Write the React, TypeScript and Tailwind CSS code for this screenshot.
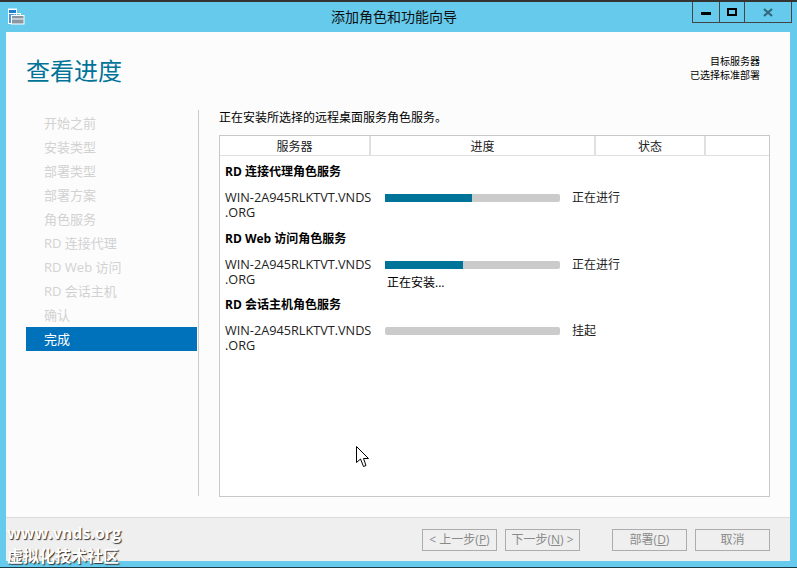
const FONT = '"Open Sans", "Noto Sans CJK SC", sans-serif';

const steps = ["开始之前", "安装类型", "部署类型", "部署方案", "角色服务", "RD 连接代理", "RD Web 访问", "RD 会话主机", "确认"];

function Group({ title, pct, status, note, className }: { title: string; pct: number; status: string; note?: string; className: string }) {
  return (
    <div className={className}>
      <div className="h-[17px] pl-[5px] text-[12px] leading-[17px] font-bold text-black">{title}</div>
      <div className="mt-[10px] flex">
        <div className="w-[165px] pl-[5px] text-[12.7px] leading-[15px] whitespace-nowrap text-[#222]">
          WIN-2A945RLKTVT.VNDS<br />.ORG
        </div>
        <div className="w-[187px]">
          <div className="mt-[4px] h-[8px] w-[175px] rounded-[2px] bg-[#cbcbcb]">
            <div className="h-full bg-[#007399]" style={{ width: `${pct}%` }} />
          </div>
          {note && <div className="mt-[6px] pl-[2px] text-[12px] leading-[16px] text-black">{note}</div>}
        </div>
        <div className="text-[12px] leading-[15px] text-[#222]">{status}</div>
      </div>
    </div>
  );
}

function Btn({ children, className = "" }: { children: React.ReactNode; className?: string }) {
  return (
    <div className={`flex h-[22px] w-[75px] items-center justify-center border border-[#acacac] text-[12px] text-[#8a8a8a] ${className}`}>
      {children}
    </div>
  );
}

export default function App() {
  return (
    <div className="relative flex h-[568px] w-[797px] flex-col overflow-hidden border-t-2 border-b border-t-[#333] border-b-[#1b3a47] bg-[#65caec]" style={{ fontFamily: FONT }}>
      {/* title bar */}
      <div className="flex h-[30px] shrink-0 items-start">
        <svg width="18" height="18" viewBox="0 0 18 18" className="mt-[6px] ml-[7px] shrink-0">
          <rect x="1.5" y="1" width="8" height="14.5" fill="#fff" stroke="#fff" />
          <rect x="2" y="2" width="7" height="3" fill="#1f7fd0" />
          <rect x="2" y="6" width="7" height="9" fill="#4a98dc" />
          <rect x="4.5" y="7.5" width="12.5" height="8.5" fill="#8a97a3" stroke="#fff" />
          <rect x="8" y="5.5" width="5.5" height="2" fill="none" stroke="#fff" />
          <rect x="5" y="10.5" width="11.5" height="1" fill="#fff" />
        </svg>
        <div className="flex-1 pt-[5px] pl-[306px] text-[14px] leading-[19px] text-[#111]">添加角色和功能向导</div>
        <div className="mr-[5px] flex h-[21px] border border-t-0 border-[#444]">
          <div className="flex w-[27px] items-center justify-center border-r border-[#444]">
            <div className="mt-[2px] h-[3px] w-[10px] bg-black" />
          </div>
          <div className="flex w-[25px] items-center justify-center border-r border-[#444]">
            <div className="h-[8px] w-[10px] border-2 border-black" />
          </div>
          <div className="flex w-[46px] items-center justify-center">
            <svg width="10" height="9" viewBox="0 0 10 9"><path d="M1 1 L9 8 M9 1 L1 8" stroke="#33667c" strokeWidth="2.2" /></svg>
          </div>
        </div>
      </div>

      {/* client area */}
      <div className="mx-[6px] flex h-[529px] w-[784px] flex-col bg-[#fcfcfc]">
        <div className="flex h-[485px] flex-col">
          <div className="flex h-[78px] shrink-0 justify-between">
            <div className="pt-[21px] pl-[20px] text-[24px] leading-[36px] text-[#007399]">查看进度</div>
            <div className="pt-[23px] pr-[30px] text-right text-[10px] leading-[13.5px] text-black">
              目标服务器<br />已选择标准部署
            </div>
          </div>
          <div className="flex flex-1">
            {/* sidebar */}
            <div className="flex h-[386px] w-[193px] shrink-0 flex-col border-r border-[#cccccc] pt-[1px] pl-[20px]">
              {steps.map((s) => (
                <div key={s} className="h-[24px] w-[171px] pl-[18px] text-[13px] leading-[24px] text-[#d2d2d2]">{s}</div>
              ))}
              <div className="h-[24px] w-[171px] bg-[#0072bc] pl-[18px] text-[13px] leading-[24px] text-white">完成</div>
            </div>
            {/* main */}
            <div className="flex flex-1 flex-col pl-[20px]">
              <div className="h-[25px] text-[12px] leading-[15px] text-black">正在安装所选择的远程桌面服务角色服务。</div>
              <div className="h-[362px] w-[551px] border border-[#c8c8c8] bg-white">
                <div className="flex h-[20px] border-b border-[#e0e0e0] text-center text-[12px] leading-[21px] text-[#222]">
                  <div className="w-[151px] border-r-2 border-[#e0e0e0]">服务器</div>
                  <div className="w-[225px] border-r-2 border-[#e0e0e0]">进度</div>
                  <div className="w-[110px] border-r-2 border-[#e0e0e0]">状态</div>
                  <div className="flex-1" />
                </div>
                <Group className="pt-[7px]" title="RD 连接代理角色服务" pct={49.7} status="正在进行" />
                <Group className="pt-[10px]" title="RD Web 访问角色服务" pct={44.6} status="正在进行" note="正在安装..." />
                <Group className="pt-[5px]" title="RD 会话主机角色服务" pct={0} status="挂起" />
              </div>
            </div>
          </div>
        </div>
        {/* footer */}
        <div className="flex flex-1 items-start justify-end border-t border-[#dcdcdc] bg-[#efefef] pt-[11px] pr-[20px]">
          <Btn className="mr-[8px]">&lt; 上一步(<span className="underline">P</span>)</Btn>
          <Btn className="mr-[32px]">下一步(<span className="underline">N</span>) &gt;</Btn>
          <Btn className="mr-[8px]">部署(<span className="underline">D</span>)</Btn>
          <Btn>取消</Btn>
        </div>
      </div>

      {/* watermark */}
      <div className="absolute top-[521px] left-[7px] text-[16px] leading-[20px] font-bold text-white [text-shadow:1px_1px_1px_#333]">www.vnds.org</div>
      <div className="absolute top-[544px] left-[7px] text-[16px] leading-[20px] font-bold text-white [text-shadow:1px_1px_1px_#333]">虚拟化技术社区</div>

      {/* mouse cursor */}
      <svg width="14" height="22" viewBox="0 0 14 22" className="absolute top-[444px] left-[356px]">
        <path d="M0.5 0.5 V16.5 L4.5 13 L7.5 20.5 L10 19.5 L7.5 12.5 L12.5 12.5 Z" fill="#fff" stroke="#000" strokeWidth="1" />
      </svg>
    </div>
  );
}
